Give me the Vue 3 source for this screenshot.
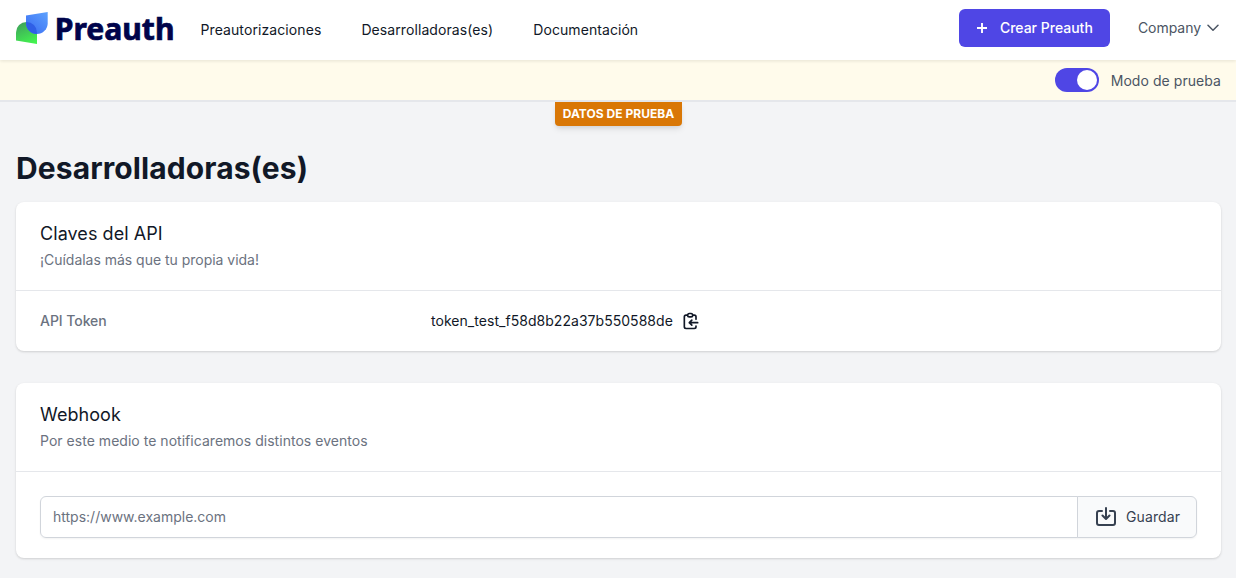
<script setup>
import { ref } from 'vue'
const links = [
  { label: 'Preautorizaciones', cls: 'n1' },
  { label: 'Desarrolladoras(es)', cls: 'n2' },
  { label: 'Documentación', cls: 'n3' }
]
const testMode = ref(true)
const url = ref('')
</script>

<template>
  <div class="page">
    <header class="header">
      <svg class="logo" width="158" height="36" viewBox="0 0 158 36" role="img" aria-label="Preauth">
        <defs>
          <linearGradient id="green" x1="0.3" y1="0" x2="0.7" y2="1">
            <stop offset="0" stop-color="#3fa35b" />
            <stop offset="1" stop-color="#43f34f" />
          </linearGradient>
          <linearGradient id="blue" x1="1" y1="0" x2="0.1" y2="1">
            <stop offset="0" stop-color="#5da2fd" />
            <stop offset="1" stop-color="#3a6cf3" />
          </linearGradient>
          <clipPath id="leaf"><path d="M0 20.5a10.5 10.5 0 0 1 21 0v11.6L0 28.6z" /></clipPath>
        </defs>
        <path d="M0 20.5a10.5 10.5 0 0 1 21 0v11.6L0 28.6z" fill="url(#green)" />
        <path d="M10 3.4L31.7 0v11.2a10.85 10.85 0 0 1-21.7 0z" fill="url(#blue)" />
        <path d="M10 3.4L31.7 0v11.2a10.85 10.85 0 0 1-21.7 0z" fill="#2f5fe6" clip-path="url(#leaf)" />
        <text class="word" x="38.7" y="27.7" textLength="119.8" lengthAdjust="spacingAndGlyphs">Preauth</text>
      </svg>
      <nav class="nav">
        <a v-for="link in links" :key="link.label" :class="link.cls">{{ link.label }}</a>
      </nav>
      <button class="create">
        <svg width="20" height="20" viewBox="0 0 20 20"><path d="M10 5v10M5 10h10" stroke="#fff" stroke-width="1.9" fill="none" /></svg>
        <span>Crear Preauth</span>
      </button>
      <div class="account">
        <span>Company</span>
        <svg width="12" height="8" viewBox="0 0 12 8"><path d="M1 1.2l5 5 5-5" fill="none" stroke="#4b5563" stroke-width="1.5" stroke-linecap="round" stroke-linejoin="round" /></svg>
      </div>
    </header>
    <div class="banner">
      <button class="switch" :class="{ on: testMode }" aria-label="Modo de prueba" @click="testMode = !testMode"><i></i></button>
      <span class="mode">Modo de prueba</span>
    </div>
    <main class="main">
      <div class="tagrow"><span class="tag">DATOS DE PRUEBA</span></div>
      <h1>Desarrolladoras(es)</h1>
      <section class="card">
        <div class="head">
          <h2 class="t1">Claves del API</h2>
          <p class="p1">¡Cuídalas más que tu propia vida!</p>
        </div>
        <div class="tokenrow">
          <span class="label">API Token</span>
          <span class="token">token_test_f58d8b22a37b550588de</span>
          <svg width="20" height="20" viewBox="0 0 24 24" fill="none" stroke="#111827" stroke-width="2" stroke-linecap="round" stroke-linejoin="round">
            <path d="M8 5H6a2 2 0 0 0-2 2v12a2 2 0 0 0 2 2h10a2 2 0 0 0 2-2v-1M8 5a2 2 0 0 0 2 2h2a2 2 0 0 0 2-2M8 5a2 2 0 0 1 2-2h2a2 2 0 0 1 2 2m0 0h2a2 2 0 0 1 2 2v3m2 4H10m0 0l3-3m-3 3l3 3" />
          </svg>
        </div>
      </section>
      <section class="card hook">
        <div class="head">
          <h2 class="t2">Webhook</h2>
          <p class="p2">Por este medio te notificaremos distintos eventos</p>
        </div>
        <div class="form">
          <input v-model="url" placeholder="https://www.example.com" />
          <button class="save">
            <svg width="22" height="20" viewBox="0 0 22 20" fill="none" stroke="#374151" stroke-width="2" stroke-linecap="round" stroke-linejoin="round">
              <path d="M7 4H4a2 2 0 0 0-2 2v10a2 2 0 0 0 2 2h14a2 2 0 0 0 2-2V6a2 2 0 0 0-2-2h-3M11 1v10.5M7.5 8.5L11 12l3.5-3.5" />
            </svg>
            <span>Guardar</span>
          </button>
        </div>
      </section>
    </main>
  </div>
</template>

<style>
body { background: #f3f4f6; }
</style>
<style scoped>
* { box-sizing: border-box; }
.page { height: 578px; overflow: hidden; background: #f3f4f6; font-family: Inter, "Liberation Sans", sans-serif; font-size: 14px; line-height: 20px; color: #111827; white-space: nowrap; }
button { font: inherit; border: 0; padding: 0; margin: 0; }
h1, h2, p { margin: 0; }
.header { position: relative; z-index: 2; display: flex; align-items: flex-start; height: 60px; padding: 0 16px; background: #fff; box-shadow: 0 1px 3px rgba(0,0,0,.06), 0 2px 3px rgba(0,0,0,.03); }
.logo { margin-top: 12px; flex: none; overflow: visible; }
.word { font: 700 30px "Noto Sans", sans-serif; fill: #00044b; stroke: #00044b; stroke-width: .7px; }
.nav { display: flex; gap: 40px; margin: 20px auto 0 26.5px; }
.nav a { letter-spacing: .09px; }
.nav .n3 { letter-spacing: .07px; }
.create { display: flex; align-items: center; width: 151px; height: 38px; margin-top: 9px; padding-left: 13px; gap: 8px; border-radius: 6px; background: #4f46e5; color: #fff; font-weight: 500; }
.create svg { flex: none; }
.account { display: flex; align-items: center; gap: 6px; margin: 18px 1px 0 28px; color: #4b5563; }
.account span { letter-spacing: -.04px; }
.banner { display: flex; align-items: center; justify-content: flex-end; height: 42px; padding: 0 15px; background: #fffbeb; border-bottom: 2px solid #e5e7eb; color: #4b5563; }
.switch { width: 44px; height: 24px; padding: 2px; border-radius: 12px; background: #d1d5db; }
.switch.on { background: #4f46e5; }
.switch i { display: block; width: 20px; height: 20px; border-radius: 50%; background: #fff; }
.switch.on i { margin-left: 20px; }
.mode { margin: 2px 0 0 12px; letter-spacing: .06px; }
.main { padding: 0 15px 0 16px; }
.tagrow { display: flex; justify-content: center; height: 24px; }
.tag { width: 127px; height: 24px; line-height: 24px; text-align: center; background: #d97706; border-radius: 0 0 4px 4px; color: #fff; font-size: 12px; font-weight: 700; letter-spacing: .03px; box-shadow: 0 4px 6px -1px rgba(0,0,0,.1), 0 2px 4px -1px rgba(0,0,0,.06); }
h1 { margin-top: 24px; font-size: 30px; line-height: 36px; font-weight: 700; letter-spacing: .1px; }
.card { margin-top: 16px; border-radius: 8px; background: #fff; box-shadow: 0 1px 3px rgba(0,0,0,.1), 0 1px 2px rgba(0,0,0,.06); }
.head { height: 89px; padding: 20px 24px 0; border-bottom: 1px solid #e5e7eb; }
h2 { font-size: 18px; line-height: 24px; font-weight: 400; letter-spacing: .06px; }
.head p { margin-top: 4px; color: #6b7280; }
.head .p1 { letter-spacing: -.02px; }
.head .p2 { letter-spacing: .03px; }
.tokenrow { display: flex; align-items: center; height: 60px; padding: 0 24px; }
.label { width: 391px; color: #6b7280; font-weight: 500; letter-spacing: -.05px; }
.token { letter-spacing: .04px; }
.tokenrow svg { margin-left: 8px; }
.hook { margin-top: 32px; height: 175px; }
.form { display: flex; height: 42px; margin: 24px 24px 0; border-radius: 6px; box-shadow: 0 1px 2px rgba(0,0,0,.05); }
input { flex: 1; min-width: 0; border: 1px solid #d1d5db; border-radius: 6px 0 0 6px; padding: 0 12px; font: inherit; background: #fff; outline: 0; }
input::placeholder { color: #6b7280; opacity: 1; }
.save { display: flex; align-items: center; width: 120px; margin-left: -1px; padding-left: 17px; border: 1px solid #d1d5db; border-radius: 0 6px 6px 0; background: #f9fafb; color: #374151; gap: 9px; }
.save span { letter-spacing: .1px; }
</style>
